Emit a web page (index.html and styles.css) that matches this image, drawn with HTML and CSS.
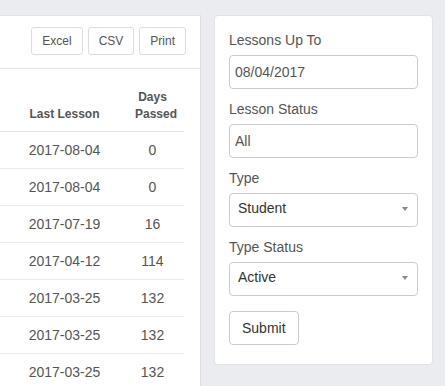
FILE: index.html
```html
<!DOCTYPE html>
<html lang="en">
<head>
    <meta charset="UTF-8">
    <meta name="viewport" content="width=device-width, initial-scale=1.0">
    <title>Lesson Report</title>
    <link rel="stylesheet" href="styles.css">
</head>
<body>

    <div class="page">
        <!-- Report table -->
        <div class="report-card">
            <div class="toolbar">
                <button class="btn-small">Excel</button>
                <button class="btn-small">CSV</button>
                <button class="btn-small">Print</button>
            </div>

            <table class="report-table">
                <colgroup>
                    <col class="col-last">
                    <col class="col-days">
                </colgroup>
                <thead>
                    <tr>
                        <th>Last Lesson</th>
                        <th class="days">Days<br>Passed</th>
                    </tr>
                </thead>
                <tbody>
                    <tr><td>2017-08-04</td><td class="days">0</td></tr>
                    <tr><td>2017-08-04</td><td class="days">0</td></tr>
                    <tr><td>2017-07-19</td><td class="days">16</td></tr>
                    <tr><td>2017-04-12</td><td class="days">114</td></tr>
                    <tr><td>2017-03-25</td><td class="days">132</td></tr>
                    <tr><td>2017-03-25</td><td class="days">132</td></tr>
                    <tr><td>2017-03-25</td><td class="days">132</td></tr>
                </tbody>
            </table>
        </div>

        <!-- Filter form -->
        <form class="filter-card">
            <div class="form-group">
                <label for="upTo">Lessons Up To</label>
                <input type="text" id="upTo" class="form-control" value="08/04/2017">
            </div>

            <div class="form-group">
                <label for="lessonStatus">Lesson Status</label>
                <input type="text" id="lessonStatus" class="form-control" value="All">
            </div>

            <div class="form-group">
                <label for="type">Type</label>
                <div class="select-wrap">
                    <select id="type" class="form-control">
                        <option>Student</option>
                        <option>Teacher</option>
                    </select>
                </div>
            </div>

            <div class="form-group">
                <label for="typeStatus">Type Status</label>
                <div class="select-wrap">
                    <select id="typeStatus" class="form-control">
                        <option>Active</option>
                        <option>Inactive</option>
                    </select>
                </div>
            </div>

            <button type="button" class="btn-submit">Submit</button>
        </form>
    </div>

</body>
</html>
```

FILE: styles.css
```css
body {
    font-family: "Liberation Sans", Arial, sans-serif;
    font-size: 14px;
    color: #555;
    background-color: #ebecf0;
    margin: 0;
    padding: 0;
    overflow: hidden;
}

.page {
    display: flex;
    align-items: flex-start;
    gap: 13px;
    padding-top: 15px;
}

/* Left card with the table */
.report-card {
    width: 201px;
    box-sizing: border-box;
    background-color: #fff;
    border-top: 1px solid #e3e4e7;
    border-right: 1px solid #dcdde0;
    flex-shrink: 0;
}

.toolbar {
    display: flex;
    justify-content: flex-end;
    gap: 5px;
    padding: 11px 14px 13px 0;
    border-bottom: 1px solid #e6e6e6;
}

.btn-small {
    font-family: inherit;
    font-size: 12px;
    line-height: 18px;
    color: #555;
    background-color: #fff;
    border: 1px solid #ddd;
    border-radius: 3px;
    padding: 4px 10px;
}

.report-table {
    width: 184px;
    table-layout: fixed;
    border-collapse: collapse;
}

.col-last {
    width: 129px;
}

.col-days {
    width: 55px;
}

.report-table th {
    font-size: 12px;
    font-weight: bold;
    line-height: 17px;
    text-align: center;
    vertical-align: bottom;
    padding: 20px 8px 8px;
    border-bottom: 1px solid #e2e2e2;
}

.report-table td {
    line-height: 20px;
    text-align: center;
    padding: 8px;
    border-bottom: 1px solid #ebebeb;
}

.report-table .days {
    padding-left: 6px;
    padding-right: 14px;
}

/* Right card with the filters */
.filter-card {
    width: 219px;
    box-sizing: border-box;
    margin: 0;
    padding: 14px 14px 19px;
    background-color: #fff;
    border: 1px solid #e1e2e5;
    border-radius: 4px;
    flex-shrink: 0;
}

.form-group {
    margin-bottom: 10px;
}

.form-group:last-of-type {
    margin-bottom: 15px;
}

label {
    display: block;
    line-height: 20px;
    margin-bottom: 5px;
    color: #555;
}

.form-control {
    display: block;
    width: 100%;
    height: 34px;
    box-sizing: border-box;
    font-family: inherit;
    font-size: 14px;
    line-height: 20px;
    color: #555;
    background-color: #fff;
    border: 1px solid #ccc;
    border-radius: 4px;
    padding: 6px 5px;
    margin: 0;
}

.select-wrap {
    position: relative;
}

.select-wrap select {
    appearance: none;
    -webkit-appearance: none;
    padding: 4px 8px 8px;
    color: #333;
}

.select-wrap::after {
    content: "";
    position: absolute;
    right: 10px;
    top: 14px;
    border-left: 3px solid transparent;
    border-right: 3px solid transparent;
    border-top: 4px solid #888;
    pointer-events: none;
}

.btn-submit {
    font-family: inherit;
    font-size: 14px;
    line-height: 20px;
    color: #333;
    background-color: #fff;
    border: 1px solid #ccc;
    border-radius: 4px;
    padding: 6px 12px;
}
```
